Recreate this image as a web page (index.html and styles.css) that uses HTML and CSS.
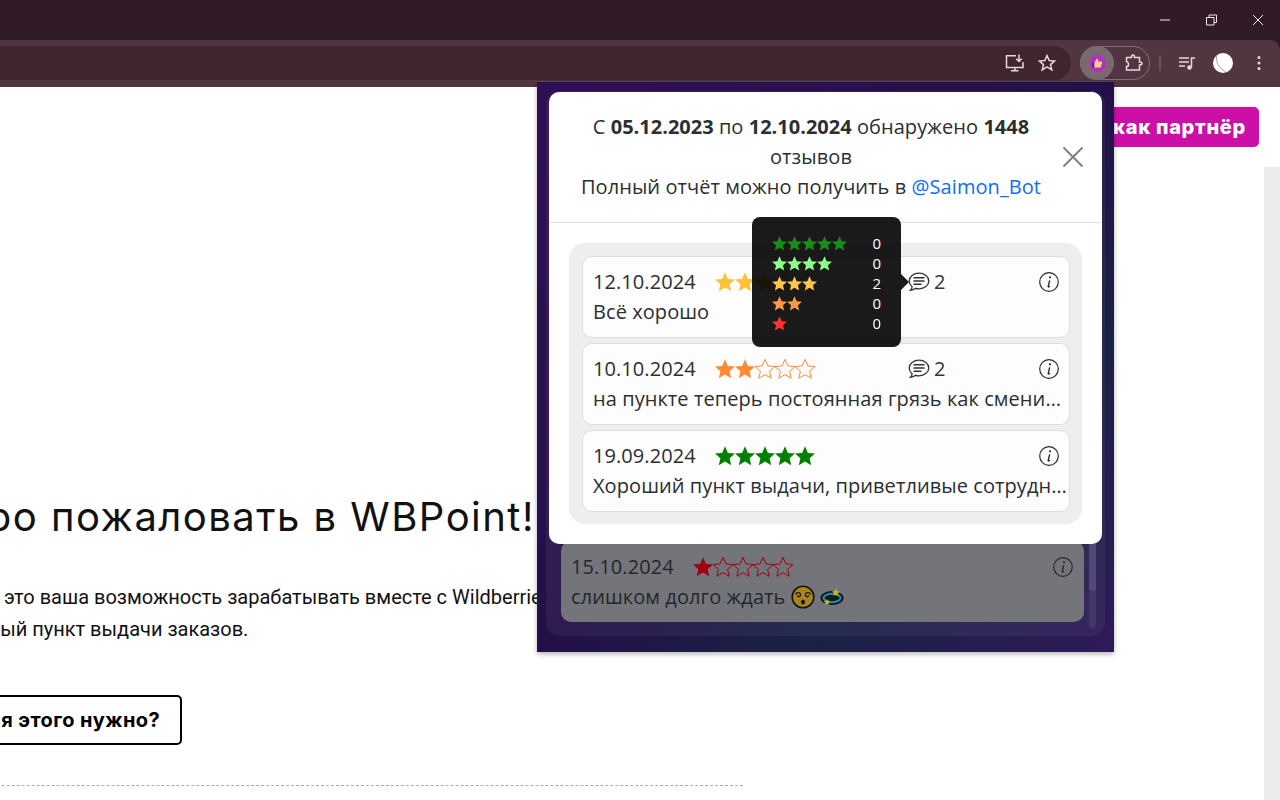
FILE: index.html
```html
<!DOCTYPE html>
<html lang="ru">
<head>
  <meta charset="UTF-8">
  <title>WBPoint</title>
  <link rel="stylesheet" href="styles.css">
</head>
<body>
  <svg class="sprite" xmlns="http://www.w3.org/2000/svg">
    <symbol id="star" viewBox="0 0 20 20">
      <path d="M10 .3l2.900 6.600 7.100.7-5.400 4.700 1.600 7-6.200-3.700-6.200 3.700 1.600-7L0 7.600l7.100-.7z"/>
    </symbol>
    <symbol id="comment" viewBox="0 0 22 20">
      <path d="M11 1.200c5.400 0 9.800 3.400 9.800 7.800s-4.400 7.800-9.800 7.800c-1.200 0-2.400-.2-3.500-.5-1.200 1.100-2.800 1.900-5 2 .9-.9 1.500-2.100 1.600-3.500C2.400 13.300 1.200 11.300 1.200 9c0-4.400 4.400-7.800 9.800-7.800z" fill="none" stroke="currentColor" stroke-width="1.300"/>
      <path d="M5.500 5.800h11M5.500 9h11M5.500 12.200h8" fill="none" stroke="currentColor" stroke-width="1.400"/>
    </symbol>
    <symbol id="info" viewBox="0 0 20 20">
      <circle cx="10" cy="10" r="9.300" fill="none" stroke="currentColor" stroke-width="1.200"/>
      <path d="M10.700 8.300l-1.500 6c-.2.800.6 1 1.700-.2" fill="none" stroke="currentColor" stroke-width="1.400"/>
      <circle cx="11" cy="5.300" r="1.100" fill="currentColor"/>
    </symbol>
  </svg>

  <header class="chrome">
    <div class="titlebar">
      <svg class="win-btn" viewBox="0 0 46 40"><path d="M18 20h10" stroke="#f3e8ee" stroke-width="1"/></svg>
      <svg class="win-btn" viewBox="0 0 46 40"><path d="M18.500 17.500h7.500v7.500h-7.500zM21 17.500v-2.500h7.500v7.500H26" fill="none" stroke="#f3e8ee" stroke-width="1"/></svg>
      <svg class="win-btn" viewBox="0 0 46 40"><path d="M19 15l10 10M29 15L19 25" stroke="#f3e8ee" stroke-width="1"/></svg>
    </div>
    <div class="toolbar">
      <div class="omnibox">
        <svg class="tool-icon" viewBox="0 0 20 20"><path d="M11 2.800H1.500v11.700h16.500V9M6 17.800h7.500M10 14.500v3" fill="none" stroke="#ecd5de" stroke-width="1.500"/><path d="M14 1.500v7M11.200 5.800L14 8.500l2.800-2.700" fill="none" stroke="#ecd5de" stroke-width="1.500"/></svg>
        <svg class="tool-icon" viewBox="0 0 20 20"><path d="M10 2.500l2.200 5 5.400.5-4.100 3.600 1.300 5.300L10 13.900l-4.800 3 1.300-5.300L2.400 8l5.400-.5z" fill="none" stroke="#ecd5de" stroke-width="1.500"/></svg>
      </div>
      <div class="ext-pill">
        <div class="ext-active">
          <div class="ext-logo">
            <svg viewBox="0 0 12 12"><path d="M1 5.500h2v5H1z" fill="#3b3f55"/><path d="M3.500 5.500L6 1.500c.8 0 1.200.6 1 1.500L6.700 4.500h3.600c.8 0 1 .8.700 1.300l-1.200 4.300c-.1.300-.4.400-.7.400H3.500z" fill="#ffd08a"/></svg>
          </div>
        </div>
        <svg class="tool-icon" viewBox="0 0 20 20"><path d="M3.500 4.500h5c0-2 .8-2.500 1.500-2.500s1.500.5 1.500 2.500h5v4.500c2 0 2.500.7 2.500 1.500s-.5 1.500-2.500 1.500v5h-13v-3.500c1.300 0 2-.8 2-1.800S4.800 8.400 3.500 8.400z" fill="none" stroke="#ecd5de" stroke-width="1.500"/></svg>
      </div>
      <div class="tool-divider"></div>
      <svg class="tool-icon media" viewBox="0 0 20 20"><path d="M2 5h10M2 9h10M2 13h6" stroke="#ecd5de" stroke-width="1.500"/><path d="M14.500 14V5H18" fill="none" stroke="#ecd5de" stroke-width="1.500"/><circle cx="12.500" cy="14.500" r="2.300" fill="#ecd5de"/></svg>
      <svg class="avatar" viewBox="0 0 20 20"><circle cx="10" cy="10" r="10" fill="#fff"/><path d="M3.500 3c-.5 6 2 12 9 15.500" fill="none" stroke="#a89aa0" stroke-width="1"/></svg>
      <svg class="tool-icon kebab" viewBox="0 0 20 20"><circle cx="10" cy="4.500" r="1.500" fill="#ecd5de"/><circle cx="10" cy="10" r="1.500" fill="#ecd5de"/><circle cx="10" cy="15.500" r="1.500" fill="#ecd5de"/></svg>
    </div>
  </header>

  <div class="page">
    <div class="page-top">
      <a class="partner-btn">Войти как партнёр</a>
    </div>
    <main class="hero">
      <h1>Добро пожаловать в WBPoint!</h1>
      <p>WBPoint — это ваша возможность зарабатывать вместе с Wildberries,<br>собственный пункт выдачи заказов.</p>
      <a class="why-btn">Для этого нужно?</a>
      <div class="dashed"></div>
    </main>
    <div class="page-scroll"></div>
  </div>

  <section class="popup">
    <div class="behind">
      <div class="behind-list">
        <div class="review review-dim">
          <div class="review-top">
            <span>15.10.2024</span>
            <span class="stars stars-dark-red">
              <svg class="star"><use href="#star"/></svg>
              <svg class="star empty"><use href="#star"/></svg>
              <svg class="star empty"><use href="#star"/></svg>
              <svg class="star empty"><use href="#star"/></svg>
              <svg class="star empty"><use href="#star"/></svg>
            </span>
            <span></span>
            <svg class="info-icon"><use href="#info"/></svg>
          </div>
          <div class="review-text">слишком долго ждать
            <svg class="emoji" viewBox="0 0 24 24"><circle cx="12" cy="12" r="10.800" fill="#a8851f" stroke="#17150c" stroke-width="1.600"/><path d="M4.500 9.500c1-2.500 4.500-2.500 5 0s-3 3-3 1M19.500 9.500c-1-2.500-4.500-2.500-5 0s3 3 3 1" fill="none" stroke="#17150c" stroke-width="1.300"/><ellipse cx="12" cy="17" rx="2" ry="2.600" fill="#17150c"/></svg>
            <svg class="emoji" viewBox="0 0 24 24"><ellipse cx="12" cy="13" rx="10.800" ry="6.200" fill="#10222e" stroke="#17150c" stroke-width="1.500"/><ellipse cx="12" cy="13" rx="8.500" ry="4.200" fill="#16181c" stroke="#1f8fc0" stroke-width="2"/><path d="M16 3.500l1.200 2.600 2.800.3-2.100 1.900.6 2.800-2.500-1.400-2.500 1.400.6-2.800-2.100-1.900 2.800-.3zM7 14l1 2 2.200.3-1.600 1.500.4 2.200L7 19l-2 1 .4-2.200-1.600-1.500L6 16z" fill="#c8b420"/></svg>
          </div>
        </div>
      </div>
      <div class="scroll-track"><div class="scroll-thumb"></div></div>
    </div>

    <div class="modal">
      <div class="modal-header">
        <div class="modal-title">С <b>05.12.2023</b> по <b>12.10.2024</b> обнаружено <b>1448</b> отзывов<br>Полный отчёт можно получить в <a>@Saimon_Bot</a></div>
        <svg class="close-icon" viewBox="0 0 22 22"><path d="M1.500 1.500l19 19M20.500 1.500l-19 19" stroke="#808080" stroke-width="2"/></svg>
      </div>
      <div class="modal-body">
        <div class="review-panel">
          <div class="review">
            <div class="review-top">
              <span>12.10.2024</span>
              <span class="stars stars-gold">
                <svg class="star"><use href="#star"/></svg>
                <svg class="star"><use href="#star"/></svg>
                <svg class="star"><use href="#star"/></svg>
                <svg class="star empty"><use href="#star"/></svg>
                <svg class="star empty"><use href="#star"/></svg>
              </span>
              <span class="comments"><svg class="comment-icon"><use href="#comment"/></svg>2</span>
              <svg class="info-icon"><use href="#info"/></svg>
            </div>
            <div class="review-text">Всё хорошо</div>
          </div>
          <div class="review">
            <div class="review-top">
              <span>10.10.2024</span>
              <span class="stars stars-orange">
                <svg class="star"><use href="#star"/></svg>
                <svg class="star"><use href="#star"/></svg>
                <svg class="star empty"><use href="#star"/></svg>
                <svg class="star empty"><use href="#star"/></svg>
                <svg class="star empty"><use href="#star"/></svg>
              </span>
              <span class="comments"><svg class="comment-icon"><use href="#comment"/></svg>2</span>
              <svg class="info-icon"><use href="#info"/></svg>
            </div>
            <div class="review-text">на пункте теперь постоянная грязь как сменился владелец</div>
          </div>
          <div class="review">
            <div class="review-top">
              <span>19.09.2024</span>
              <span class="stars stars-green">
                <svg class="star"><use href="#star"/></svg>
                <svg class="star"><use href="#star"/></svg>
                <svg class="star"><use href="#star"/></svg>
                <svg class="star"><use href="#star"/></svg>
                <svg class="star"><use href="#star"/></svg>
              </span>
              <span></span>
              <svg class="info-icon"><use href="#info"/></svg>
            </div>
            <div class="review-text">Хороший пункт выдачи, приветливые сотрудники, всегда</div>
          </div>
        </div>
      </div>
    </div>

    <div class="tooltip">
      <div class="tip-row">
        <span class="tip-stars stars-green">
          <svg class="tip-star"><use href="#star"/></svg>
          <svg class="tip-star"><use href="#star"/></svg>
          <svg class="tip-star"><use href="#star"/></svg>
          <svg class="tip-star"><use href="#star"/></svg>
          <svg class="tip-star"><use href="#star"/></svg>
        </span>
        <span>0</span>
      </div>
      <div class="tip-row">
        <span class="tip-stars stars-light">
          <svg class="tip-star"><use href="#star"/></svg>
          <svg class="tip-star"><use href="#star"/></svg>
          <svg class="tip-star"><use href="#star"/></svg>
          <svg class="tip-star"><use href="#star"/></svg>
        </span>
        <span>0</span>
      </div>
      <div class="tip-row">
        <span class="tip-stars stars-gold">
          <svg class="tip-star"><use href="#star"/></svg>
          <svg class="tip-star"><use href="#star"/></svg>
          <svg class="tip-star"><use href="#star"/></svg>
        </span>
        <span>2</span>
      </div>
      <div class="tip-row">
        <span class="tip-stars stars-orange">
          <svg class="tip-star"><use href="#star"/></svg>
          <svg class="tip-star"><use href="#star"/></svg>
        </span>
        <span>0</span>
      </div>
      <div class="tip-row">
        <span class="tip-stars stars-red">
          <svg class="tip-star"><use href="#star"/></svg>
        </span>
        <span>0</span>
      </div>
    </div>
  </section>
</body>
</html>
```

FILE: styles.css
```css
* { box-sizing: border-box; }
html, body { height: 100%; }
body { margin: 0; overflow: hidden; background: #fff; font-family: "Open Sans", sans-serif; color: #212529; }
.sprite { display: none; }

/* browser frame */
.chrome { height: 87px; background: #301b26; }
.titlebar { height: 40px; display: flex; justify-content: flex-end; }
.win-btn { width: 46px; height: 40px; }
.toolbar { height: 47px; padding-top: 6px; background: #513541; border-top-right-radius: 10px; display: flex; align-items: flex-start; }
.omnibox { flex: 1; height: 34px; background: #3e2530; border-radius: 0 17px 17px 0; display: flex; justify-content: flex-end; align-items: center; gap: 12px; padding-right: 14px; }
.tool-icon { width: 20px; height: 20px; margin-top: 7px; }
.omnibox .tool-icon { margin-top: 0; }
.ext-pill { width: 70px; height: 34px; margin: 0 9px; border: 1px solid #86717b; border-radius: 17px; display: flex; align-items: center; gap: 9px; }
.ext-pill .tool-icon { margin-top: 0; }
.ext-active { width: 34px; height: 34px; margin-left: -1px; background: #7c6871; border-radius: 50%; display: flex; align-items: center; justify-content: center; }
.ext-logo { width: 17px; height: 17px; background: #b52fc0; border-radius: 50%; display: flex; align-items: center; justify-content: center; }
.ext-logo svg { width: 12px; height: 12px; }
.tool-divider { width: 2px; height: 16px; margin-top: 9px; background: #6d5560; }
.media { margin-left: 16px; }
.avatar { width: 20px; height: 20px; margin: 7px 0 0 16px; }
.kebab { margin-left: 16px; margin-right: 11px; }

/* page behind the popup */
.page { position: relative; height: 713px; }
.page-top { height: 60px; padding: 20px 21px 0 0; display: flex; justify-content: flex-end; }
.partner-btn { height: 40px; padding: 0 13px; background: #cc0fa6; border-radius: 5px; color: #fff; font: 800 20px/40px Inter, sans-serif; letter-spacing: 0.7px; white-space: nowrap; }
.hero { margin-left: -98px; padding-top: 340px; width: 841px; }
.hero h1 { margin: 0; font: 400 40px/60px Inter, sans-serif; letter-spacing: 1.47px; color: #111; white-space: nowrap; }
.hero p { margin: 34px 0 0; font: 400 20px/32px Roboto, sans-serif; color: #111; white-space: nowrap; }
.why-btn { display: inline-block; margin-top: 50px; margin-left: 47px; height: 50px; padding: 0 20px; border: 2px solid #000; border-radius: 5px; font: 700 20px/46px Inter, sans-serif; letter-spacing: 0.4px; color: #000; white-space: nowrap; }
.dashed { margin-top: 40px; border-top: 1px dashed #aaa; }
.page-scroll { position: absolute; right: 0; top: 80px; bottom: 0; width: 16px; background: #ebebeb; }

/* extension popup */
.popup { position: absolute; left: 537px; top: 81px; width: 577px; height: 571px; padding: 9px 9px 16px; background: linear-gradient(135deg, #2f0f55 0%, #241048 50%, #1a2245 72%, #2f1a58 100%); border-top: 1px solid #4a4550; box-shadow: 0 2px 5px rgba(0, 0, 0, 0.3); }
.behind { height: 100%; padding: 0 9px 8px 15px; background: rgba(255, 255, 255, 0.05); border-radius: 14px; display: flex; gap: 5px; }
.behind-list { flex: 1; display: flex; flex-direction: column; justify-content: flex-end; padding-bottom: 6px; }
.scroll-track { width: 7px; background: rgba(255, 255, 255, 0.07); border-radius: 4px; }
.scroll-thumb { height: 500px; background: rgba(255, 255, 255, 0.09); border-radius: 4px; }

.modal { position: absolute; left: 12px; top: 10px; width: 553px; height: 452px; background: #fff; border-radius: 10px; }
.modal-header { height: 131px; padding: 20px 18px 20px 16px; border-bottom: 1px solid #dee2e6; display: flex; align-items: center; }
.modal-title { flex: 1; font-size: 20px; line-height: 30px; letter-spacing: 0.07px; text-align: center; color: #2b2f33; }
.modal-title b { font-weight: 700; letter-spacing: 0; }
.modal-title a { color: #0d6efd; }
.close-icon { width: 22px; height: 22px; margin-left: 5px; }
.modal-body { padding: 20px; }
.review-panel { padding: 13px 12px 12px 13px; background: #eee; border-radius: 16px; display: flex; flex-direction: column; gap: 5px; }

.review { height: 82px; padding: 10px 1px 10px 10px; background: #fdfdfd; border: 1px solid #ddd; border-radius: 10px; font-size: 20px; line-height: 30px; letter-spacing: 0.07px; color: #2b2f33; }
.review-top { display: grid; grid-template-columns: 121.500px 193.500px 1fr 20px; align-items: center; padding-right: 9px; }
.review-text { white-space: nowrap; overflow: hidden; text-overflow: ellipsis; }
.review-dim { background: #74757b; border: 0; height: 81px; padding: 11px 10px 10px; color: #25262a; }
.review-dim .review-top { padding-right: 1px; }

.stars { display: flex; }
.star { width: 20px; height: 20px; fill: currentColor; overflow: visible; }
.star.empty { fill: none; stroke: currentColor; stroke-width: 1; }
.stars-gold { color: #ffc03a; }
.stars-orange { color: #ff8c33; }
.stars-green { color: #008000; }
.stars-light { color: #80ff80; }
.stars-red { color: #ff1a1a; }
.stars-dark-red { color: #a00010; }

.comments { display: flex; align-items: center; gap: 4px; color: #333; }
.comment-icon { width: 22px; height: 20px; color: #333; }
.info-icon { width: 20px; height: 20px; color: #2a2a2a; }
.emoji { width: 24px; height: 24px; vertical-align: -5px; }

/* rating tooltip */
.tooltip { position: absolute; left: 215px; top: 135px; width: 149px; height: 130px; padding: 16px 20px; background: #000; border-radius: 8px; opacity: 0.9; color: #fff; font-size: 15px; font-weight: 500; }
.tooltip::after { content: ""; position: absolute; left: 100%; top: 57px; border: 8px solid transparent; border-left-color: #000; border-right: 0; }
.tip-row { height: 20px; display: flex; align-items: center; justify-content: space-between; }
.tip-stars { display: flex; }
.tip-star { width: 15px; height: 15px; fill: currentColor; }
```
